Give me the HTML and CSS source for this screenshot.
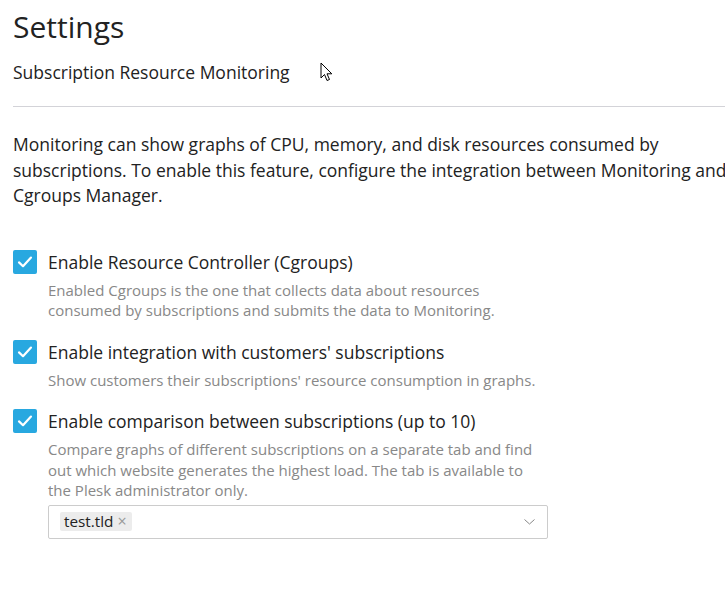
FILE: index.html
```html
<!DOCTYPE html>
<html lang="en">
<head>
    <meta charset="UTF-8">
    <meta name="viewport" content="width=device-width, initial-scale=1.0">
    <title>Settings</title>
    <link rel="stylesheet" href="styles.css">
</head>
<body>

    <div class="page">
        <h1 class="title">Settings</h1>
        <h2 class="subtitle">Subscription Resource Monitoring</h2>
        <hr class="divider">

        <p class="intro">Monitoring can show graphs of CPU, memory, and disk resources consumed by subscriptions. To enable this feature, configure the integration between Monitoring and Cgroups Manager.</p>

        <div class="options">
            <div class="option">
                <span class="checkbox">
                    <svg width="18" height="18" viewBox="0 0 18 18"><path d="M3 9.4 L7 13.2 L15 4.6" fill="none" stroke="#fff" stroke-width="2.2" stroke-linecap="round" stroke-linejoin="round"/></svg>
                </span>
                <div class="option-body">
                    <div class="option-label">Enable Resource Controller (Cgroups)</div>
                    <div class="option-hint">Enabled Cgroups is the one that collects data about resources consumed by subscriptions and submits the data to Monitoring.</div>
                </div>
            </div>

            <div class="option">
                <span class="checkbox">
                    <svg width="18" height="18" viewBox="0 0 18 18"><path d="M3 9.4 L7 13.2 L15 4.6" fill="none" stroke="#fff" stroke-width="2.2" stroke-linecap="round" stroke-linejoin="round"/></svg>
                </span>
                <div class="option-body">
                    <div class="option-label">Enable integration with customers' subscriptions</div>
                    <div class="option-hint">Show customers their subscriptions' resource consumption in graphs.</div>
                </div>
            </div>

            <div class="option">
                <span class="checkbox">
                    <svg width="18" height="18" viewBox="0 0 18 18"><path d="M3 9.4 L7 13.2 L15 4.6" fill="none" stroke="#fff" stroke-width="2.2" stroke-linecap="round" stroke-linejoin="round"/></svg>
                </span>
                <div class="option-body">
                    <div class="option-label">Enable comparison between subscriptions (up to 10)</div>
                    <div class="option-hint">Compare graphs of different subscriptions on a separate tab and find out which website generates the highest load. The tab is available to the Plesk administrator only.</div>
                    <div class="select">
                        <span class="tag">test.tld <span class="tag-remove">×</span></span>
                        <svg class="chevron" width="11" height="6" viewBox="0 0 11 6"><path d="M0.5 0.5 L5.5 5 L10.5 0.5" fill="none" stroke="#888" stroke-width="1"/></svg>
                    </div>
                </div>
            </div>
        </div>
    </div>

    <svg class="cursor" width="14" height="22" viewBox="0 0 14 22"><path d="M1 1 L1 16 L4.5 12.5 L7 18.5 L9.5 17.5 L7 11.8 L11.8 11.8 Z" fill="#fff" stroke="#000" stroke-width="1" stroke-linejoin="miter"/></svg>

</body>
</html>
```

FILE: styles.css
```css
body {
    margin: 0;
    padding: 0;
    font-family: "Open Sans", sans-serif;
    color: #222;
    background-color: #fff;
    overflow: hidden;
}

.page {
    padding: 0 0 0 13px;
}

.title {
    margin: 0;
    padding-top: 6px;
    font-size: 30px;
    font-weight: 400;
    line-height: 42px;
    color: #222;
}

.subtitle {
    margin: 12px 0 0;
    font-size: 17.5px;
    font-weight: 400;
    line-height: 24px;
    color: #222;
}

.divider {
    margin: 22px 0 0;
    border: none;
    border-top: 1px solid #d3d3d8;
}

.intro {
    margin: 25px 0 0;
    font-size: 17.5px;
    line-height: 25.5px;
    width: 740px;
    color: #222;
}

.options {
    margin-top: 41px;
}

.option {
    display: flex;
    gap: 11px;
    margin-bottom: 19px;
}

.checkbox {
    flex: none;
    width: 24px;
    height: 24px;
    border-radius: 2px;
    background-color: #28a8e0;
    display: flex;
    align-items: center;
    justify-content: center;
}

.option-body {
    width: 500px;
}

.option-label {
    font-size: 17.5px;
    line-height: 24px;
    color: #222;
}

.option-hint {
    margin-top: 6px;
    font-size: 15px;
    line-height: 20.5px;
    color: #888;
    width: 498px;
}

.select {
    margin-top: 4px;
    height: 32px;
    border: 1px solid #ccc;
    border-radius: 2px;
    display: flex;
    align-items: center;
    justify-content: space-between;
    padding: 0 12px 0 11px;
}

.tag {
    background-color: #ececec;
    border-radius: 2px;
    padding: 0 5px 0 4px;
    font-size: 15.3px;
    line-height: 19px;
    color: #222;
}

.tag-remove {
    color: #999;
    font-size: 16px;
}

.chevron {
    display: block;
}

.cursor {
    position: absolute;
    left: 320px;
    top: 62px;
}
```
